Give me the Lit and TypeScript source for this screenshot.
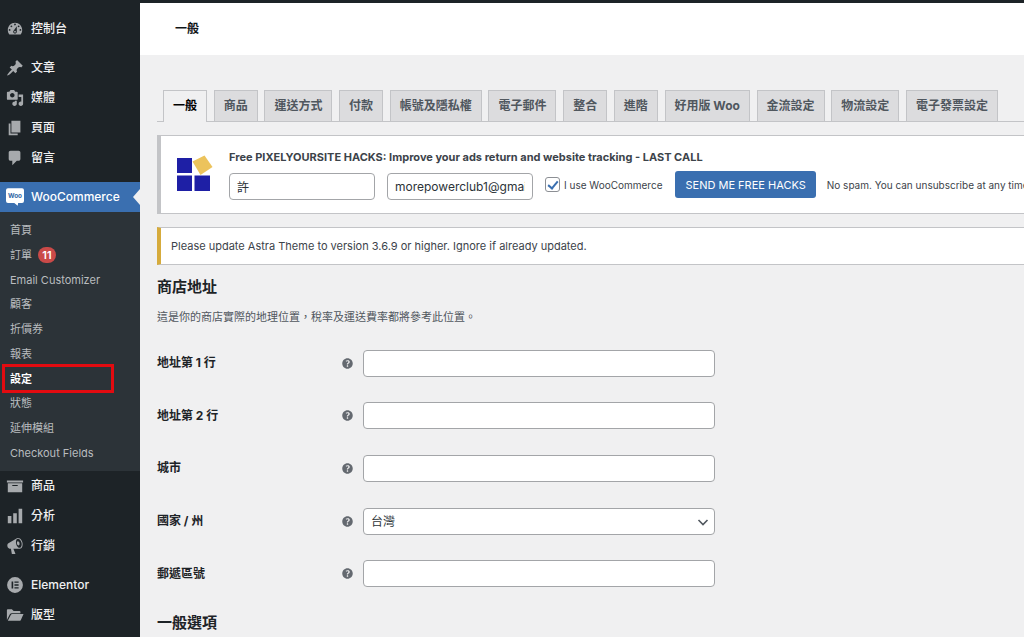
import { LitElement, html, css, svg, nothing } from "lit";
import { customElement, property } from "lit/decorators.js";
import { classMap } from "lit/directives/class-map.js";

const ICONS: Record<string, unknown> = {
  dashboard: svg`<path d="M3.76 16h12.48c1.1-1.37 1.76-3.11 1.76-5 0-4.42-3.58-8-8-8s-8 3.58-8 8c0 1.89.66 3.63 1.76 5zM10 4c.55 0 1 .45 1 1s-.45 1-1 1-1-.45-1-1 .45-1 1-1zM6 6c.55 0 1 .45 1 1s-.45 1-1 1-1-.45-1-1 .45-1 1-1zm8 0c.55 0 1 .45 1 1s-.45 1-1 1-1-.45-1-1 .45-1 1-1zm-5.37 5.55L12 7v6c0 1.1-.9 2-2 2s-2-.9-2-2c0-.57.24-1.08.63-1.45zM4 10c.55 0 1 .45 1 1s-.45 1-1 1-1-.45-1-1 .45-1 1-1zm12 0c.55 0 1 .45 1 1s-.45 1-1 1-1-.45-1-1 .45-1 1-1zm-5 3c0-.55-.45-1-1-1s-1 .45-1 1 .45 1 1 1 1-.45 1-1z"/>`,
  pin: svg`<path d="M10.44 3.02l1.82-1.82 6.36 6.35-1.83 1.82c-1.05-.68-2.48-.57-3.41.36l-.75.75c-.92.93-1.04 2.35-.35 3.41l-1.83 1.82-2.41-2.41-2.8 2.79c-.42.42-3.38 2.71-3.8 2.29s1.86-3.39 2.28-3.81l2.79-2.79L4.1 9.36l1.83-1.82c1.05.69 2.48.57 3.4-.36l.75-.75c.93-.92 1.05-2.35.36-3.41z"/>`,
  media: svg`<path d="M13 11V4c0-.55-.45-1-1-1h-1.67L9 1H5L3.67 3H2c-.55 0-1 .45-1 1v7c0 .55.45 1 1 1h10c.55 0 1-.45 1-1zM7 4.5c1.38 0 2.5 1.12 2.5 2.5S8.38 9.5 7 9.5 4.5 8.38 4.5 7 5.62 4.5 7 4.5zM14 6h5v10.5c0 1.38-1.12 2.5-2.5 2.5S14 17.88 14 16.5s1.12-2.5 2.5-2.5c.17 0 .34.02.5.05V9h-3V6zm-4 8.05V13h2v3.5c0 1.38-1.12 2.5-2.5 2.5S7 17.88 7 16.5 8.12 14 9.5 14c.17 0 .34.02.5.05z"/>`,
  page: svg`<path d="M6 15V2h10v13H6zm-1 1h8v2H3V5h2v11z"/>`,
  comment: svg`<path d="M5 2h9c1.1 0 2 .9 2 2v7c0 1.1-.9 2-2 2h-2l-5 5v-5H5c-1.1 0-2-.9-2-2V4c0-1.1.9-2 2-2z"/>`,
  woo: svg`<path fill="#fff" d="M2.200 0.200h15.600Q20 .2 20 2.400v12Q20 16.600 17.800 16.600H13.500L13 19.800 9.200 16.600H2.200Q0 16.600 0 14.400V2.400Q0 .2 2.200.2z"/><text class="woo-word" x="10" y="11.200" text-anchor="middle">Woo</text>`,
  archive: svg`<path d="M19 4v2H1V4h18zM2 7h16v10H2V7zm11 3V9H7v1h6z"/>`,
  chart: svg`<path d="M18 18V2h-4v16h4zm-6 0V7H8v11h4zm-6 0v-8H2v8h4z"/>`,
  megaphone: svg`<path d="M18.15 5.94c.46 1.62.38 3.22-.02 4.48-.42 1.28-1.26 2.18-2.3 2.48-.16.06-.26.06-.4.06-.06.02-.12.02-.18.02-.06.02-.14.02-.22.02h-6.8l2.22 5.5c.02.14-.06.26-.14.34-.08.1-.24.16-.34.16H6.95c-.1 0-.26-.06-.34-.16-.08-.08-.16-.2-.14-.34l-1-5.500H4.250l-.02-.02c-.5.06-1.08-.18-1.54-.62s-.88-1.080-1.060-1.880c-.24-.8-.2-1.560-.02-2.200.18-.62.58-1.080 1.060-1.300l.02-.02 9-5.400c.1-.06.18-.1.24-.16.06-.04.14-.08.24-.12.16-.08.28-.12.5-.18 1.040-.3 2.240.1 3.220.98s1.840 2.240 2.260 3.860zm-2.580 5.980h-.02c.4-.1.74-.34 1.040-.7.58-.7.86-1.760.86-3.040 0-.64-.1-1.300-.28-1.980-.34-1.360-1.020-2.500-1.780-3.240s-1.680-1.100-2.460-.88c-.82.22-1.400.96-1.700 2-.32 1.040-.28 2.360.06 3.720.38 1.360 1 2.500 1.800 3.240.78.74 1.620 1.100 2.480.88zm-2.540-7.080c.22-.04.42-.02.62.04.38.16.76.48 1.020 1s.42 1.200.42 1.780c0 .3-.04.56-.12.8-.18.48-.44.84-.86.94-.34.1-.8-.06-1.140-.4s-.64-.86-.78-1.500c-.18-.62-.12-1.240.02-1.720s.48-.84.82-.94z"/>`,
  elementor: svg`<path fill-rule="evenodd" d="M10 1.200a8.800 8.800 0 1 0 0 17.600A8.800 8.800 0 0 0 10 1.200zM6.200 6H8v8H6.200zM9.400 6H14v1.600H9.400zM9.400 9.200H14v1.600H9.400zM9.400 12.400H14V14H9.400z"/>`,
  folder: svg`<path d="M1 15.500V4.500Q1 3.500 2 3.500h4.500L8.500 5.500H15q1 0 1 1V8H6.500Q5 8 4.300 9.300z"/><path d="M2 16.500L5.300 10Q5.800 9 7 9h12.500l-3 6.500q-.5 1-1.700 1z"/>`,
  help: svg`<path d="M17 10c0-3.870-3.140-7-7-7-3.870 0-7 3.130-7 7s3.130 7 7 7c3.860 0 7-3.130 7-7zm-6.300 1.480H9.140v-.43c0-.38.08-.7.24-.98s.46-.57.88-.89c.41-.29.68-.53.81-.71.14-.18.2-.39.2-.62 0-.25-.09-.44-.28-.58-.19-.13-.45-.19-.79-.19-.58 0-1.250.19-2 .57l-.64-1.280c.87-.49 1.800-.74 2.770-.74.81 0 1.450.2 1.920.58.48.39.71.91.71 1.550 0 .43-.09.8-.29 1.110-.19.32-.57.67-1.110 1.060-.38.28-.61.49-.71.63-.1.15-.15.34-.15.57v.35zm-1.470 2.740c-.18-.17-.27-.42-.27-.73 0-.33.08-.58.26-.75s.43-.25.77-.25c.32 0 .57.09.75.26s.27.42.27.74c0 .3-.09.55-.27.72-.18.18-.43.27-.75.27-.33 0-.58-.09-.76-.26z"/>`,
};

@customElement("wp-icon")
class WpIcon extends LitElement {
  @property() name = "";
  static styles = css`
    :host { display: block; flex: none; width: 18px; height: 18px; }
    svg { display: block; width: 100%; height: 100%; fill: currentColor; }
    .woo-word { font: 700 7px "Inter", sans-serif; fill: #2f66a5; }
  `;
  render() {
    return html`<svg viewBox="0 0 20 20" aria-hidden="true">${ICONS[this.name]}</svg>`;
  }
}

interface MenuItem { icon: string; label: string; current?: boolean; }
const MENU: MenuItem[][] = [
  [{ icon: "dashboard", label: "控制台" }],
  [
    { icon: "pin", label: "文章" },
    { icon: "media", label: "媒體" },
    { icon: "page", label: "頁面" },
    { icon: "comment", label: "留言" },
  ],
  [
    { icon: "woo", label: "WooCommerce", current: true },
    { icon: "archive", label: "商品" },
    { icon: "chart", label: "分析" },
    { icon: "megaphone", label: "行銷" },
  ],
  [
    { icon: "elementor", label: "Elementor" },
    { icon: "folder", label: "版型" },
  ],
];
const SUBMENU = ["首頁", "訂單", "Email Customizer", "顧客", "折價券", "報表", "設定", "狀態", "延伸模組", "Checkout Fields"];

@customElement("admin-menu")
class AdminMenu extends LitElement {
  static styles = css`
    :host { display: block; background: #1d2327; color: #f0f0f1; padding-top: 11px; }
    ul { list-style: none; margin: 0; padding: 0; }
    nav { display: flex; flex-direction: column; gap: 9px; }
    a { color: inherit; text-decoration: none; }
    .item { display: flex; align-items: center; gap: 7px; height: 30px; padding-left: 6px; font-size: 12px; font-weight: 500; }
    .item wp-icon { color: #a7aaad; }
    .current { position: relative; background: #3a6fb0; color: #fff; }
    .current::after { content: ""; position: absolute; right: 0; top: 7px; border: 8px solid transparent; border-left: 0; border-right: 7px solid #f0f0f1; }
    .sub { display: grid; grid-auto-rows: 1fr; min-height: 247px; padding: 6px 0; background: #2c3338; color: #b9bcbf; font-size: 11px; }
    .sub li { position: relative; display: flex; align-items: center; padding-left: 10px; }
    .sub a { display: flex; align-items: center; gap: 6px; }
    .count { min-width: 18px; height: 16px; line-height: 16px; border-radius: 8px; background: #ca4a48; color: #fff; text-align: center; font-weight: 600; }
    .sub .active { color: #fff; font-weight: 700; }
    .active::after { content: ""; position: absolute; inset: -2px 26px -2px 2px; border: 3px solid #e30b10; }
  `;
  renderSub() {
    return html`<ul class="sub">
      ${SUBMENU.map((label) => html`<li class=${classMap({ active: label === "設定" })}>
        <a href="#">${label}${label === "訂單" ? html`<span class="count">11</span>` : nothing}</a>
      </li>`)}
    </ul>`;
  }
  render() {
    return html`<nav>
      ${MENU.map((group) => html`<ul>
        ${group.map((m) => html`<li>
          <a href="#" class=${classMap({ item: true, current: !!m.current })}><wp-icon name=${m.icon}></wp-icon><span>${m.label}</span></a>
          ${m.current ? this.renderSub() : nothing}
        </li>`)}
      </ul>`)}
    </nav>`;
  }
}

const TABS = ["一般", "商品", "運送方式", "付款", "帳號及隱私權", "電子郵件", "整合", "進階", "好用版 Woo", "金流設定", "物流設定", "電子發票設定"];
const FIELDS = [
  { id: "address-1", label: "地址第 1 行" },
  { id: "address-2", label: "地址第 2 行" },
  { id: "city", label: "城市" },
  { id: "country", label: "國家 / 州", option: "台灣" },
  { id: "postcode", label: "郵遞區號" },
];

@customElement("app-root")
class AppRoot extends LitElement {
  static styles = css`
    :host {
      display: grid; grid-template-columns: 140px minmax(0, 1fr); grid-template-rows: 3px auto;
      height: 100vh; overflow: hidden; background: #f0f0f1; color: #3c434a;
      font-family: "Inter", "Noto Sans CJK TC", sans-serif; font-size: 12px; line-height: 18px;
    }
    * { box-sizing: border-box; }
    .bar { grid-column: 1 / -1; background: #1d2327; }
    main { min-width: 0; overflow: hidden; }
    .head { display: flex; align-items: center; height: 52px; padding-left: 35px; background: #fff; }
    h1 { margin: 0; font-size: 12px; font-weight: 700; color: #101517; }
    .body { padding: 35px 0 0 17px; }
    .tabs { display: flex; justify-content: space-between; padding: 0 26px 0 6px; border-bottom: 1px solid #c3c4c7; }
    .tab { flex: none; height: 31px; padding: 0 9px; line-height: 30px; border: 1px solid #c3c4c7; border-bottom: 0; background: #dcdcde; color: #50575e; font-weight: 700; text-decoration: none; white-space: nowrap; }
    .tab.on { height: 32px; margin-bottom: -1px; background: #f0f0f1; color: #000; }
    .notice { background: #fff; border: 1px solid #c3c4c7; border-left: 4px solid #c3c4c7; border-right: 0; margin-top: 13px; }
    .promo { display: flex; gap: 15px; height: 79px; padding: 12px 0 0 15px; white-space: nowrap; }
    .logo { flex: none; width: 38px; height: 38px; margin-top: 7px; }
    .promo strong { display: block; font-size: 11px; font-weight: 700; }
    .form { display: flex; align-items: center; margin-top: 5px; font-size: 10px; }
    input, select, button { font-family: inherit; font-size: 12px; }
    .text { height: 27px; padding: 0 7px; border: 1px solid #a3a5a8; border-radius: 4px; background: #fff; color: #2c3338; outline: 0; }
    .form .text { width: 146px; margin-right: 12px; }
    .check { display: flex; align-items: center; gap: 4px; margin-bottom: 4px; }
    .check input { appearance: none; width: 15px; height: 15px; margin: 0; border: 1px solid #8c8f94; border-radius: 3px; background: #fff; display: grid; place-items: center; }
    .check input:checked::before { content: ""; width: 4px; height: 8px; margin-bottom: 2px; border: solid #3a6fb0; border-width: 0 2px 2px 0; transform: rotate(40deg); }
    .send { height: 27px; margin: 0 11px 4px 13px; padding: 0 10px; border: 0; border-radius: 3px; background: #3a6fb0; color: #fff; font-size: 11px; }
    .spam { margin-bottom: 4px; }
    .warn { border-left-color: #d6ab3c; height: 38px; padding-left: 10px; line-height: 36px; font-size: 11px; }
    h2 { margin: 12px 0 0; font-size: 15px; line-height: 20px; font-weight: 700; color: #1d2327; }
    .desc { margin: 11px 0 0; font-size: 11px; line-height: 18px; color: #50575e; }
    .fields { display: grid; grid-auto-rows: 1fr; min-height: 263px; margin: 11px 0 13px; }
    .field { display: grid; grid-template-columns: 183px 23px minmax(0, 352px); align-items: center; }
    .field label { font-weight: 700; color: #1d2327; }
    .field wp-icon { width: 15px; height: 15px; color: #646970; }
    .pick { position: relative; display: grid; }
    .pick select { appearance: none; }
    .pick svg { position: absolute; right: 6px; top: 8px; width: 12px; height: 12px; fill: none; stroke: #50575e; stroke-width: 1.6; pointer-events: none; }
  `;
  render() {
    return html`
      <div class="bar"></div>
      <admin-menu></admin-menu>
      <main>
        <header class="head"><h1>一般</h1></header>
        <div class="body">
          <nav class="tabs">
            ${TABS.map((t, i) => html`<a href="#" class=${classMap({ tab: true, on: i === 0 })}>${t}</a>`)}
          </nav>
          <section class="notice promo">
            <svg class="logo" viewBox="0 0 38 38" aria-hidden="true">
              <g fill="#1e1fa5"><path d="M1 3h15v15H1zM1 20.500h15V36H1zM18.500 20.500H34V36H18.500z"/></g>
              <path fill="#ecc35c" d="M16.500 6.500L28.500 .5 36.500 12 24.500 20z"/>
            </svg>
            <div>
              <strong>Free PIXELYOURSITE HACKS: Improve your ads return and website tracking - LAST CALL</strong>
              <form class="form">
                <input class="text" type="text" aria-label="Name" value="許">
                <input class="text" type="text" aria-label="Email" value="morepowerclub1@gmail.com">
                <label class="check"><input type="checkbox" checked>I use WooCommerce</label>
                <button class="send" type="button">SEND ME FREE HACKS</button>
                <span class="spam">No spam. You can unsubscribe at any time.</span>
              </form>
            </div>
          </section>
          <section class="notice warn">Please update Astra Theme to version 3.6.9 or higher. Ignore if already updated.</section>
          <h2>商店地址</h2>
          <p class="desc">這是你的商店實際的地理位置，稅率及運送費率都將參考此位置。</p>
          <div class="fields">
            ${FIELDS.map((f) => html`<div class="field">
              <label for=${f.id}>${f.label}</label>
              <wp-icon name="help"></wp-icon>
              ${f.option
                ? html`<div class="pick"><select class="text" id=${f.id}><option>${f.option}</option></select><svg viewBox="0 0 12 12"><path d="M1.500 4l4.500 4.500L10.500 4"/></svg></div>`
                : html`<input class="text" type="text" id=${f.id}>`}
            </div>`)}
          </div>
          <h2>一般選項</h2>
        </div>
      </main>`;
  }
}
